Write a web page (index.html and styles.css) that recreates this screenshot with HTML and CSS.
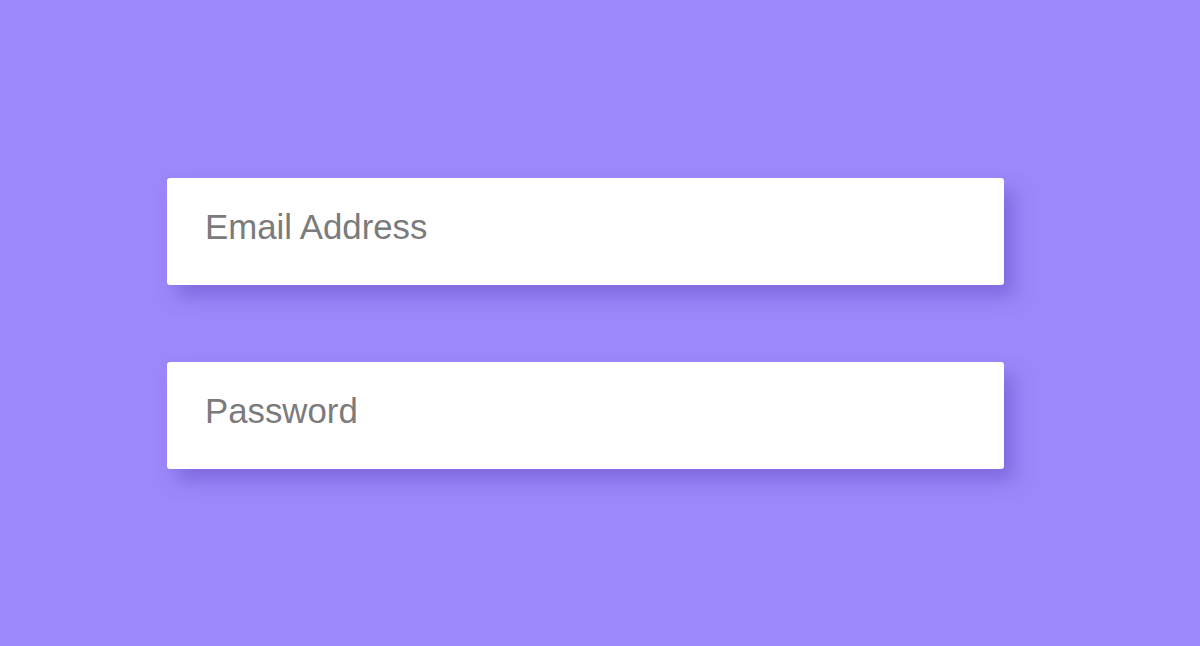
FILE: index.html
```html
<!DOCTYPE html>
<html lang="en">
<head>
<meta charset="utf-8">
<title>Login</title>
<link rel="stylesheet" href="styles.css">
</head>
<body>
<main class="page">
  <form class="form">
    <div class="field"><span class="placeholder">Email Address</span></div>
    <div class="field"><span class="placeholder">Password</span></div>
  </form>
</main>
</body>
</html>
```
FILE: styles.css
```css
html, body {
  margin: 0;
  padding: 0;
}
body {
  background: #9d87fa;
  font-family: "Liberation Sans", Arial, sans-serif;
  width: 1200px;
  height: 646px;
  overflow: hidden;
}
.page {
  padding-top: 178px;
  padding-left: 167px;
}
.form {
  display: flex;
  flex-direction: column;
  gap: 77px;
  width: 837px;
}
.field {
  box-sizing: border-box;
  height: 107px;
  background: #ffffff;
  border-radius: 3px;
  padding: 29px 38px 0;
  box-shadow: 10px 12px 18px rgba(104, 80, 200, 0.5);
}
.placeholder {
  display: block;
  font-size: 34.8px;
  line-height: 40px;
  color: #7b7b7b;
}
```
